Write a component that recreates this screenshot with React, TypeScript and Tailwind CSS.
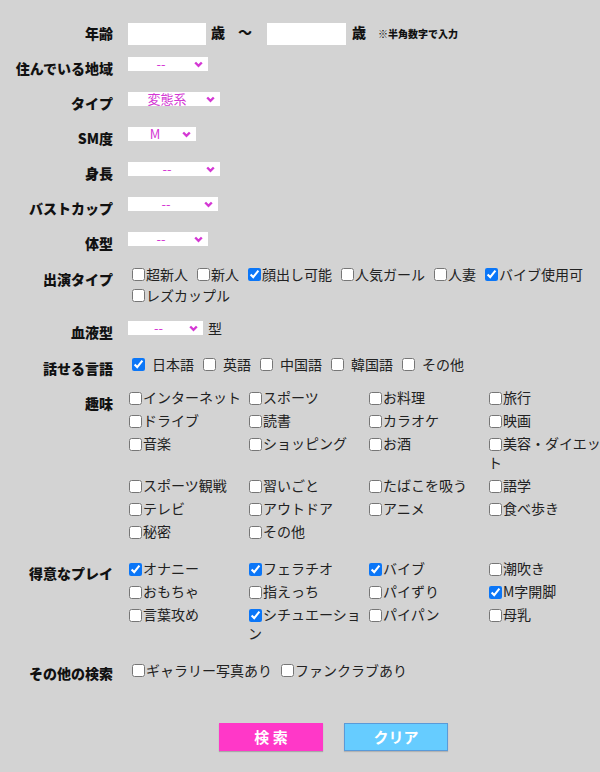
import React from "react";

const font = { fontFamily: '"Noto Sans CJK JP", "Noto Sans", sans-serif' };

const Chevron = () => (
  <svg width="9" height="7" viewBox="0 0 9 7" className="mr-[5px] shrink-0">
    <polyline points="1.2,1.5 4.5,4.8 7.8,1.5" fill="none" stroke="#d437d4" strokeWidth="2.4" />
  </svg>
);

const FakeSelect = ({ w, value }: { w: string; value: string }) => (
  <div className={`${w} ml-[15px] h-[14px] bg-white flex items-center`}>
    <span className="flex-1 text-center text-[13px] leading-[14px] text-[#d437d4]">{value}</span>
    <Chevron />
  </div>
);

const Label = ({ children, pt }: { children: React.ReactNode; pt: string }) => (
  <div className={`w-[113px] shrink-0 text-right font-black text-[14px] leading-[14px] text-[#111] ${pt}`}>
    {children}
  </div>
);

const SelectRow = ({ label, w, value, h = "h-[35px]" }: { label: string; w: string; value: string; h?: string }) => (
  <div className={`flex ${h}`}>
    <Label pt="pt-[4px]">{label}</Label>
    <FakeSelect w={w} value={value} />
  </div>
);

const Box = ({ checked, cls }: { checked?: boolean; cls: string }) => (
  <input
    type="checkbox"
    defaultChecked={checked}
    className={`w-[13px] h-[13px] accent-[#0b76f7] align-middle ${cls}`}
  />
);

const InlineItem = ({ text, checked, gap = "mr-[1px]" }: { text: string; checked?: boolean; gap?: string }) => (
  <label className="inline-flex items-center h-[21px] mr-[5px] text-[14px] text-[#222]">
    <Box checked={checked} cls={`ml-[4px] ${gap}`} />
    {text}
  </label>
);

const GridCell = ({ text, checked }: { text: string; checked?: boolean }) => (
  <label className="block pt-[1px] pb-[3px] leading-[19px] text-[14px] text-[#222]">
    <Box checked={checked} cls="ml-[1px] mr-[1px] relative -top-[1px]" />
    {text}
  </label>
);

const hobbies = [
  "インターネット", "スポーツ", "お料理", "旅行",
  "ドライブ", "読書", "カラオケ", "映画",
  "音楽", "ショッピング", "お酒", "美容・ダイエット",
  "スポーツ観戦", "習いごと", "たばこを吸う", "語学",
  "テレビ", "アウトドア", "アニメ", "食べ歩き",
  "秘密", "その他",
];

const plays: [string, boolean][] = [
  ["オナニー", true], ["フェラチオ", true], ["バイブ", true], ["潮吹き", false],
  ["おもちゃ", false], ["指えっち", false], ["パイずり", false], ["M字開脚", true],
  ["言葉攻め", false], ["シチュエーション", true], ["パイパン", false], ["母乳", false],
];

export default function App() {
  return (
    <div className="w-[600px] h-[772px] overflow-hidden bg-[#d3d3d3]" style={font}>
      <div className="pt-[20px]">
        {/* 年齢 */}
        <div className="flex items-center h-[28px] mb-[9px]">
          <Label pt="pb-[3px]">年齢</Label>
          <div className="ml-[15px] flex items-center">
            <input className="w-[78px] h-[22px] bg-white" />
            <span className="ml-[5px] font-black text-[14px] text-[#111] pb-[4px]">歳</span>
            <span className="ml-[13px] w-[14px] font-black text-[14px] text-[#111] pb-[6px]">〜</span>
            <input className="ml-[15px] w-[79px] h-[22px] bg-white" />
            <span className="ml-[6px] font-black text-[14px] text-[#111] pb-[4px]">歳</span>
            <span className="ml-[12px] font-black text-[10px] text-[#111] pb-[2px]">※半角数字で入力</span>
          </div>
        </div>

        <SelectRow label="住んでいる地域" w="w-[80px]" value="--" />
        <SelectRow label="タイプ" w="w-[92px]" value="変態系" />
        <SelectRow label="SM度" w="w-[68px]" value="M" />
        <SelectRow label="身長" w="w-[92px]" value="--" />
        <SelectRow label="バストカップ" w="w-[90px]" value="--" />
        <SelectRow label="体型" w="w-[80px]" value="--" h="h-[33px]" />

        {/* 出演タイプ */}
        <div className="flex mb-[15px]">
          <Label pt="pt-[7px]">出演タイプ</Label>
          <div className="ml-[15px] -mt-[1px] flex-1 flex flex-wrap">
            <InlineItem text="超新人" />
            <InlineItem text="新人" />
            <InlineItem text="顔出し可能" checked />
            <InlineItem text="人気ガール" />
            <InlineItem text="人妻" />
            <InlineItem text="バイブ使用可" checked />
            <InlineItem text="レズカップル" />
          </div>
        </div>

        {/* 血液型 */}
        <div className="flex h-[34px]">
          <Label pt="pt-[4px]">血液型</Label>
          <FakeSelect w="w-[75px]" value="--" />
          <span className="ml-[5px] text-[14px] leading-[14px] text-[#222]">型</span>
        </div>

        {/* 話せる言語 */}
        <div className="flex h-[32px]">
          <Label pt="pt-[6px]">話せる言語</Label>
          <div className="ml-[15px] -mt-[1px] flex">
            <InlineItem text="日本語" checked gap="mr-[7px]" />
            <InlineItem text="英語" gap="mr-[7px]" />
            <InlineItem text="中国語" gap="mr-[7px]" />
            <InlineItem text="韓国語" gap="mr-[7px]" />
            <InlineItem text="その他" gap="mr-[7px]" />
          </div>
        </div>

        {/* 趣味 */}
        <div className="flex mb-[14px]">
          <Label pt="pt-[9px]">趣味</Label>
          <div className="ml-[15px] grid grid-cols-[120px_120px_120px_120px] shrink-0">
            {hobbies.map((h) => (
              <GridCell key={h} text={h} />
            ))}
          </div>
        </div>

        {/* 得意なプレイ */}
        <div className="flex mb-[15px]">
          <Label pt="pt-[8px]">得意なプレイ</Label>
          <div className="ml-[15px] grid grid-cols-[120px_120px_120px_120px] shrink-0">
            {plays.map(([p, c]) => (
              <GridCell key={p} text={p} checked={c} />
            ))}
          </div>
        </div>

        {/* その他の検索 */}
        <div className="flex">
          <Label pt="pt-[5px]">その他の検索</Label>
          <div className="ml-[15px] -mt-[1px] flex">
            <InlineItem text="ギャラリー写真あり" />
            <InlineItem text="ファンクラブあり" />
          </div>
        </div>

        <div className="flex gap-[21px] pl-[219px] mt-[42px]">
          <button className="w-[104px] h-[28px] bg-[#ff38c8] text-white font-bold text-[15px] shadow-[0_1px_1px_rgba(0,0,0,0.2)]">
            検 索
          </button>
          <button className="w-[104px] h-[28px] bg-[#66ccff] border border-[#5a9ad8] text-white font-bold text-[15px] shadow-[0_1px_1px_rgba(0,0,0,0.15)]">
            クリア
          </button>
        </div>
      </div>
    </div>
  );
}
